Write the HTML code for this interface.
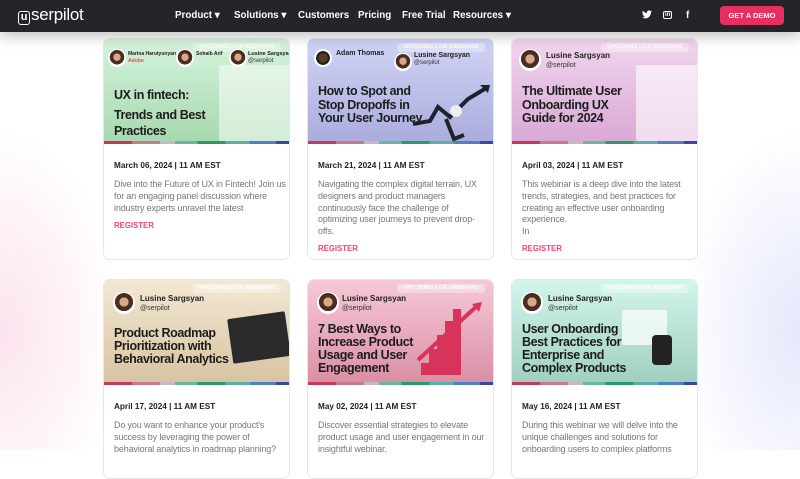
<!DOCTYPE html><html><head><style>
*{margin:0;padding:0;box-sizing:border-box}
body{width:800px;height:450px;overflow:hidden;font-family:"Liberation Sans",sans-serif;position:relative;background:#fff}
.bg{position:absolute;inset:0;background:radial-gradient(ellipse 120px 200px at 0px 330px,#fbe3ee,transparent),radial-gradient(ellipse 120px 200px at 800px 330px,#e4e8fb,transparent)}
nav{position:absolute;left:0;top:0;width:800px;height:32px;background:#252428;color:#fff;box-shadow:0 4px 14px rgba(0,0,0,.25);z-index:2}
.logo{position:absolute;left:18px;top:5px;font-size:17px;letter-spacing:-.3px}
.logo b{display:inline-block;width:12px;height:14px;border:1.5px solid #fff;border-radius:3px;font-size:11px;line-height:11px;text-align:center;margin-right:1px}
.m{position:absolute;top:10px;font-size:9.8px;font-weight:bold;white-space:nowrap}
.demo{position:absolute;left:720px;top:6px;width:64px;height:19px;background:#e8305f;border-radius:4px;font-size:7.5px;font-weight:bold;text-align:center;line-height:19px}
.card{position:absolute;width:187px;background:#fff;border:1px solid #e6e6e6;border-radius:7px;overflow:hidden}
.img{position:absolute;left:0;top:0;width:187px;height:105px}
.strip{position:absolute;left:0;top:102px;width:187px;height:3px;background:linear-gradient(90deg,#c33a5a 0 15%,#c8798b 15% 30%,#c6b8c6 30% 38%,#69b79d 38% 50%,#2b9a6b 50% 65%,#5ab0a8 65% 78%,#4d82c0 78% 92%,#3b45a8 92%)}
.tag{position:absolute;right:8px;top:4px;width:88px;height:9px;background:rgba(255,255,255,.35);border-radius:3px;color:rgba(255,255,255,.9);font-size:5.5px;font-weight:bold;text-align:center;line-height:9px}
.t{position:absolute;left:10px;font-size:12.5px;font-weight:bold;color:#1c1c1c;line-height:13.5px;letter-spacing:-.4px;white-space:nowrap}
.av{position:absolute;width:18px;height:18px;border-radius:50%;background:radial-gradient(circle at 50% 45%,#d9a88a 0 30%,#4a2c20 32% 60%,#fff 62%);border:1px solid #fff}
.nm{position:absolute;font-size:7px;font-weight:bold;color:#222;white-space:nowrap}
.sb{position:absolute;font-size:6px;color:#333}
.d{position:absolute;left:10px;font-size:8.2px;font-weight:bold;color:#222}
.p{position:absolute;left:10px;font-size:9px;line-height:11.8px;color:#777;white-space:nowrap;letter-spacing:-.15px;top:140px!important}
.r{position:absolute;left:10px;font-size:7.8px;font-weight:bold;color:#f0457a}
.dec{position:absolute;background:rgba(255,255,255,.5);border-radius:2px}
</style></head><body><div class="bg"></div>
<nav><div class="logo"><b>u</b>serpilot</div>
<span class="m" style="left:175px">Product ▾</span><span class="m" style="left:234px">Solutions ▾</span><span class="m" style="left:298px">Customers</span><span class="m" style="left:358px">Pricing</span><span class="m" style="left:402px">Free Trial</span><span class="m" style="left:453px">Resources ▾</span>
<svg style="position:absolute;left:642px;top:10px" width="10" height="9" viewBox="0 0 24 20"><path d="M24 2.5a10 10 0 0 1-2.8.8A5 5 0 0 0 23.3.6a10 10 0 0 1-3.1 1.2A4.9 4.9 0 0 0 11.8 6 14 14 0 0 1 1.7.9a4.9 4.9 0 0 0 1.5 6.6A4.9 4.9 0 0 1 1 6.9a4.9 4.9 0 0 0 3.9 4.8 5 5 0 0 1-2.2.1 4.9 4.9 0 0 0 4.6 3.4A9.900 9.900 0 0 1 0 17.2 14 14 0 0 0 7.5 19.4c9 0 14-7.5 14-14v-.6A10 10 0 0 0 24 2.5z" fill="#fff"/></svg>
<span class="m" style="left:663px;border:1px solid #fff;border-radius:2px;font-size:6px;padding:0 1px;top:11px">in</span><span class="m" style="left:686px">f</span>
<div class="demo">GET A DEMO</div></nav>

<div class="card" style="left:103px;top:38px;height:222px">
<div class="img" style="background:linear-gradient(180deg,#d6f3dc,#a6d8ae)"></div><div class="dec" style="left:115px;top:26px;width:72px;height:76px"></div><div class="strip"></div>
<div class="tag">UPCOMING LIVE WEBINARS</div>
<div class="av" style="left:4px;top:10px"></div><div class="nm" style="left:24px;top:12px;font-size:5px">Marina Harutyunyan</div><div class="sb" style="left:24px;top:19px;color:#e02020;font-size:5.5px">Adobe</div>
<div class="av" style="left:72px;top:10px"></div><div class="nm" style="left:92px;top:12px;font-size:5px">Sohaib Arif</div>
<div class="av" style="left:125px;top:10px"></div><div class="nm" style="left:144px;top:12px;font-size:5.5px">Lusine Sargsyan</div><div class="sb" style="left:144px;top:19px">@serpilot</div>
<div class="t" style="top:46px;line-height:20px">UX in fintech:<br>Trends and Best<br><span style="position:relative;top:-4px">Practices</span></div>
<div class="d" style="top:122px">March 06, 2024 | 11 AM EST</div>
<div class="p">Dive into the Future of UX in Fintech! Join us<br>for an engaging panel discussion where<br>industry experts unravel the latest</div>
<div class="r" style="top:182px">REGISTER</div></div>

<div class="card" style="left:307px;top:38px;height:222px">
<div class="img" style="background:linear-gradient(180deg,#d1d3f5,#a9acdc)"></div><div class="strip"></div>
<div class="tag">UPCOMING LIVE WEBINARS</div>
<div class="av" style="left:6px;top:10px;background:radial-gradient(circle,#5a3a2a 0 40%,#222 42% 60%,#fff 62%)"></div><div class="nm" style="left:28px;top:11px;font-size:7px">Adam Thomas</div>
<div class="av" style="left:86px;top:14px"></div><div class="nm" style="left:106px;top:13px">Lusine Sargsyan</div><div class="sb" style="left:106px;top:21px">@serpilot</div>
<svg style="position:absolute;left:100px;top:40px" width="85" height="65"><path d="M5 45 L22 42 L30 28 L42 38 L60 20 L80 8" stroke="#1f2130" stroke-width="4" fill="none"/><path d="M72 6 L82 6 L80 14z" fill="#1f2130"/><path d="M38 40 l8 20 l10 -4" stroke="#222" stroke-width="4" fill="none"/><circle cx="48" cy="32" r="6" fill="#eee"/></svg>
<div class="t" style="top:46px">How to Spot and<br>Stop Dropoffs in<br>Your User Journey</div>
<div class="d" style="top:122px">March 21, 2024 | 11 AM EST</div>
<div class="p">Navigating the complex digital terrain, UX<br>designers and product managers<br>continuously face the challenge of<br>optimizing user journeys to prevent drop-<br>offs.</div>
<div class="r" style="top:205px">REGISTER</div></div>

<div class="card" style="left:511px;top:38px;height:222px">
<div class="img" style="background:linear-gradient(180deg,#f2d5ee,#d8a8d4)"></div><div class="dec" style="left:124px;top:26px;width:63px;height:76px;background:rgba(255,255,255,.6)"></div><div class="strip"></div>
<div class="tag">UPCOMING LIVE WEBINARS</div>
<div class="av" style="left:7px;top:10px;width:22px;height:22px"></div><div class="nm" style="left:34px;top:12px;font-size:8px">Lusine Sargsyan</div><div class="sb" style="left:34px;top:23px;font-size:7px">@serpilot</div>
<div class="t" style="top:46px">The Ultimate User<br>Onboarding UX<br>Guide for 2024</div>
<div class="d" style="top:122px">April 03, 2024 | 11 AM EST</div>
<div class="p">This webinar is a deep dive into the latest<br>trends, strategies, and best practices for<br>creating an effective user onboarding<br>experience.<br>In</div>
<div class="r" style="top:205px">REGISTER</div></div>

<div class="card" style="left:103px;top:279px;height:200px">
<div class="img" style="background:linear-gradient(180deg,#f3e8d3,#d6c3a0)"></div><div class="dec" style="left:126px;top:35px;width:58px;height:45px;background:#2a2a2c;transform:rotate(-8deg)"></div><div class="strip"></div>
<div class="tag">UPCOMING LIVE WEBINARS</div>
<div class="av" style="left:9px;top:12px;width:22px;height:22px"></div><div class="nm" style="left:36px;top:14px;font-size:8px">Lusine Sargsyan</div><div class="sb" style="left:36px;top:25px;font-size:7px">@serpilot</div>
<div class="t" style="top:47px;line-height:13px">Product Roadmap<br>Prioritization with<br>Behavioral Analytics</div>
<div class="d" style="top:122px">April 17, 2024 | 11 AM EST</div>
<div class="p">Do you want to enhance your product's<br>success by leveraging the power of<br>behavioral analytics in roadmap planning?</div></div>

<div class="card" style="left:307px;top:279px;height:200px">
<div class="img" style="background:linear-gradient(180deg,#f6c9d6,#d98ea4)"></div>
<svg style="position:absolute;left:100px;top:20px" width="85" height="80"><path d="M5 75 h8 v-12 h8 v-14 h8 v-14 h8 v-14 h8 v-12 h8 v66z" fill="#d8335a"/><path d="M10 60 L70 5" stroke="#d8335a" stroke-width="4"/><path d="M64 4 l10 -2 l-3 10z" fill="#d8335a"/></svg>
<div class="strip"></div><div class="tag">UPCOMING LIVE WEBINARS</div>
<div class="av" style="left:9px;top:12px;width:22px;height:22px"></div><div class="nm" style="left:34px;top:14px;font-size:8px">Lusine Sargsyan</div><div class="sb" style="left:34px;top:25px;font-size:7px">@serpilot</div>
<div class="t" style="top:43px;line-height:13px">7 Best Ways to<br>Increase Product<br>Usage and User<br>Engagement</div>
<div class="d" style="top:122px">May 02, 2024 | 11 AM EST</div>
<div class="p">Discover essential strategies to elevate<br>product usage and user engagement in our<br>insightful webinar.</div></div>

<div class="card" style="left:511px;top:279px;height:200px">
<div class="img" style="background:linear-gradient(180deg,#d3f5ec,#9fcfbf)"></div><div class="dec" style="left:110px;top:30px;width:45px;height:35px;background:rgba(255,255,255,.7)"></div><div class="dec" style="left:140px;top:55px;width:20px;height:30px;background:#222;border-radius:4px"></div><div class="strip"></div>
<div class="tag">UPCOMING LIVE WEBINARS</div>
<div class="av" style="left:9px;top:12px;width:22px;height:22px"></div><div class="nm" style="left:36px;top:14px;font-size:8px">Lusine Sargsyan</div><div class="sb" style="left:36px;top:25px;font-size:7px">@serpilot</div>
<div class="t" style="top:43px;line-height:13px">User Onboarding<br>Best Practices for<br>Enterprise and<br>Complex Products</div>
<div class="d" style="top:122px">May 16, 2024 | 11 AM EST</div>
<div class="p">During this webinar we will delve into the<br>unique challenges and solutions for<br>onboarding users to complex platforms</div></div>
</body></html>
